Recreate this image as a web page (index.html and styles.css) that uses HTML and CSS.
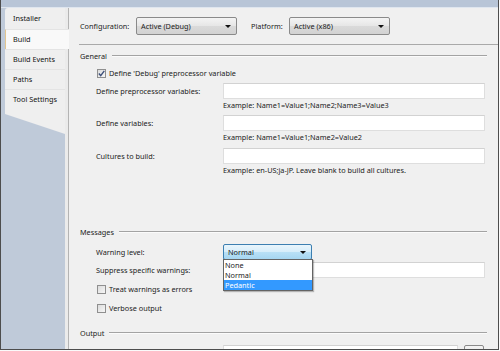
FILE: index.html
```html
<!DOCTYPE html>
<html lang="en">
<head>
    <meta charset="UTF-8">
    <title>Project Properties - Build</title>
    <link rel="stylesheet" href="styles.css">
</head>
<body>
    <div class="window">
        <div class="titlebar"></div>
        <div class="main">
            <nav class="sidebar">
                <ul class="tabs">
                    <li class="tab">Installer</li>
                    <li class="tab active">Build</li>
                    <li class="tab">Build Events</li>
                    <li class="tab">Paths</li>
                    <li class="tab">Tool Settings</li>
                </ul>
                <div class="tabs-tail"></div>
            </nav>
            <div class="content">
                <div class="toolbar">
                    <span class="tb-label">Configuration:</span>
                    <div class="select">Active (Debug)<span class="caret"></span></div>
                    <span class="tb-label platform">Platform:</span>
                    <div class="select">Active (x86)<span class="caret"></span></div>
                </div>
                <div class="page">
                    <div class="section-head">General<span class="rule"></span></div>
                    <div class="check-row first">
                        <span class="checkbox checked">
                            <svg width="7" height="7" viewBox="0 0 7 7"><path d="M0.8 3.6 L2.7 5.6 L6.3 0.9" fill="none" stroke="#3c4f7a" stroke-width="1.4"/></svg>
                        </span>
                        Define 'Debug' preprocessor variable
                    </div>
                    <div class="field-row r1">
                        <span class="field-label">Define preprocessor variables:</span>
                        <span class="input"></span>
                    </div>
                    <div class="example">Example: Name1=Value1;Name2;Name3=Value3</div>
                    <div class="field-row r2">
                        <span class="field-label">Define variables:</span>
                        <span class="input"></span>
                    </div>
                    <div class="example">Example: Name1=Value1;Name2=Value2</div>
                    <div class="field-row r3">
                        <span class="field-label">Cultures to build:</span>
                        <span class="input"></span>
                    </div>
                    <div class="example">Example: en-US;ja-JP. Leave blank to build all cultures.</div>

                    <div class="section-head messages">Messages<span class="rule"></span></div>
                    <div class="field-row warn">
                        <span class="field-label">Warning level:</span>
                        <div class="dropdown">
                            <div class="select open">Normal<span class="caret"></span></div>
                            <ul class="options">
                                <li>None</li>
                                <li>Normal</li>
                                <li class="hover">Pedantic</li>
                            </ul>
                        </div>
                    </div>
                    <div class="field-row suppress">
                        <span class="field-label">Suppress specific warnings:</span>
                        <span class="input"></span>
                    </div>
                    <div class="check-row treat"><span class="checkbox"></span>Treat warnings as errors</div>
                    <div class="check-row verbose"><span class="checkbox"></span>Verbose output</div>

                    <div class="section-head output">Output<span class="rule"></span></div>
                    <div class="field-row outpath">
                        <span class="field-label">Output path:</span>
                        <span class="input short">bin\Debug\</span>
                        <span class="browse"></span>
                    </div>
                </div>
            </div>
        </div>
    </div>
</body>
</html>
```

FILE: styles.css
```css
html, body {
    margin: 0;
    padding: 0;
    width: 500px;
    height: 351px;
    overflow: hidden;
    background: #fafafa;
    font-family: "Noto Sans", sans-serif;
    font-size: 7.3px;
    color: #1b1b1b;
}
.window {
    width: 499px;
    height: 350px;
    box-sizing: border-box;
    border: 1px solid #4d4d4d;
    border-top: none;
    display: flex;
    flex-direction: column;
    overflow: hidden;
    background: #f0f0f0;
}
.titlebar {
    height: 7px;
    flex: none;
    background: #b8c5d7;
    border-bottom: 1px solid #dfe6ef;
}
.main {
    flex: 1;
    display: flex;
    min-height: 0;
}

/* left tab strip */
.sidebar {
    flex: none;
    width: 60px;
    background: #bfcad9;
    border-right: 3px solid #ebebeb;
    padding-left: 4px;
}
.tabs {
    list-style: none;
    margin: 0;
    padding: 0;
    background: #efefef;
    border-top-left-radius: 3px;
}
.tab {
    height: 20px;
    box-sizing: border-box;
    line-height: 19px;
    padding-left: 8px;
    border-top: 1px solid #e4e4e4;
    color: #111;
}
.tab:first-child {
    border-top: none;
    height: 21px;
    line-height: 21px;
}
.tab.active {
    position: relative;
    z-index: 1;
    margin-right: -4px;
    background: #f9f9f9;
    border-left: 1px solid #e2c58f;
    padding-left: 7px;
}
.tabs-tail {
    height: 26px;
    background: #efefef;
    clip-path: polygon(0 0, 100% 0, 100% 25px, 0 5px);
}

/* right page */
.content {
    flex: 1;
    border-left: 1px solid #b4b4b4;
    display: flex;
    flex-direction: column;
    min-width: 0;
}
.toolbar {
    height: 36px;
    flex: none;
    margin-left: 10px;
    padding-left: 1px;
    border-bottom: 1px solid #a9a9a9;
    display: flex;
    align-items: center;
}
.tb-label {
    width: 56px;
}
.tb-label.platform {
    width: 38px;
    margin-left: 14px;
}
.select {
    position: relative;
    width: 101px;
    height: 18px;
    box-sizing: border-box;
    border: 1px solid #8a8a8a;
    border-radius: 2px;
    background: linear-gradient(#f4f4f4, #e6e6e6 50%, #dadada 51%, #d2d2d2);
    padding-left: 4px;
    line-height: 16px;
    display: flex;
    align-items: center;
}
.caret {
    margin-left: auto;
    margin-right: 5px;
    width: 0;
    height: 0;
    border-left: 3px solid transparent;
    border-right: 3px solid transparent;
    border-top: 3px solid #111;
}

.page {
    padding: 0 11px;
    display: flex;
    flex-direction: column;
}
.section-head {
    height: 12px;
    margin-top: 5px;
    display: flex;
    align-items: center;
}
.section-head .rule {
    flex: 1;
    margin-left: 5px;
    height: 0;
    border-top: 1px solid #a3a3a3;
    border-bottom: 1px solid #fbfbfb;
}
.section-head.messages {
    margin-top: 50px;
}
.section-head.output {
    margin-top: 13px;
}

.check-row {
    height: 12px;
    padding-left: 17px;
    display: flex;
    align-items: center;
}
.check-row.first { margin-top: 5px; }
.check-row.treat { margin-top: 5px; }
.check-row.verbose { margin-top: 7px; }
.checkbox {
    width: 9px;
    height: 9px;
    box-sizing: border-box;
    border: 1px solid #8f8f8f;
    background: linear-gradient(135deg, #dcdcdc, #f6f6f6);
    margin-right: 3px;
    display: flex;
    align-items: center;
    justify-content: center;
}

.field-row {
    height: 16px;
    display: flex;
    align-items: center;
}
.field-row.r1 { margin-top: 4px; }
.field-row.r2 { margin-top: 4px; }
.field-row.r3 { margin-top: 5px; }
.field-row.warn { margin-top: 6px; }
.field-row.suppress { margin-top: 2px; }
.field-row.outpath { margin-top: 6px; align-items: flex-start; }
.field-label {
    width: 127px;
    padding-left: 16px;
    flex: none;
}
.outpath .field-label {
    padding-top: 3px;
}
.input {
    flex: 1;
    height: 16px;
    box-sizing: border-box;
    margin-right: 2px;
    background: #fff;
    border: 1px solid #dedede;
    border-top-color: #d2d2d2;
    color: #555;
    padding-left: 3px;
    line-height: 14px;
}
.input.short {
    flex: none;
    width: 235px;
    margin-right: 6px;
}
.browse {
    width: 20px;
    height: 16px;
    box-sizing: border-box;
    border: 1px solid #8a8a8a;
    border-radius: 2px;
    background: linear-gradient(#f4f4f4, #dcdcdc);
}
.example {
    height: 12px;
    line-height: 12px;
    padding-left: 143px;
}

/* open combo with its list */
.dropdown {
    position: relative;
    width: 89px;
}
.select.open {
    width: 89px;
    height: 16px;
    line-height: 14px;
    border-color: #3c7fb1;
    border-radius: 2px;
    background: linear-gradient(#e9f5fc, #d6edfa 50%, #b9e0f6 51%, #a6d6f1);
}
.options {
    position: absolute;
    top: 15px;
    left: 0;
    z-index: 2;
    width: 90px;
    box-sizing: border-box;
    margin: 0;
    padding: 0;
    list-style: none;
    background: #fff;
    border: 1px solid #646464;
    box-shadow: 1px 1px 1px rgba(0, 0, 0, 0.25);
}
.options li {
    height: 10px;
    line-height: 10px;
    padding-left: 1px;
}
.options li.hover {
    background: #3399ff;
    color: #fff;
}
```
